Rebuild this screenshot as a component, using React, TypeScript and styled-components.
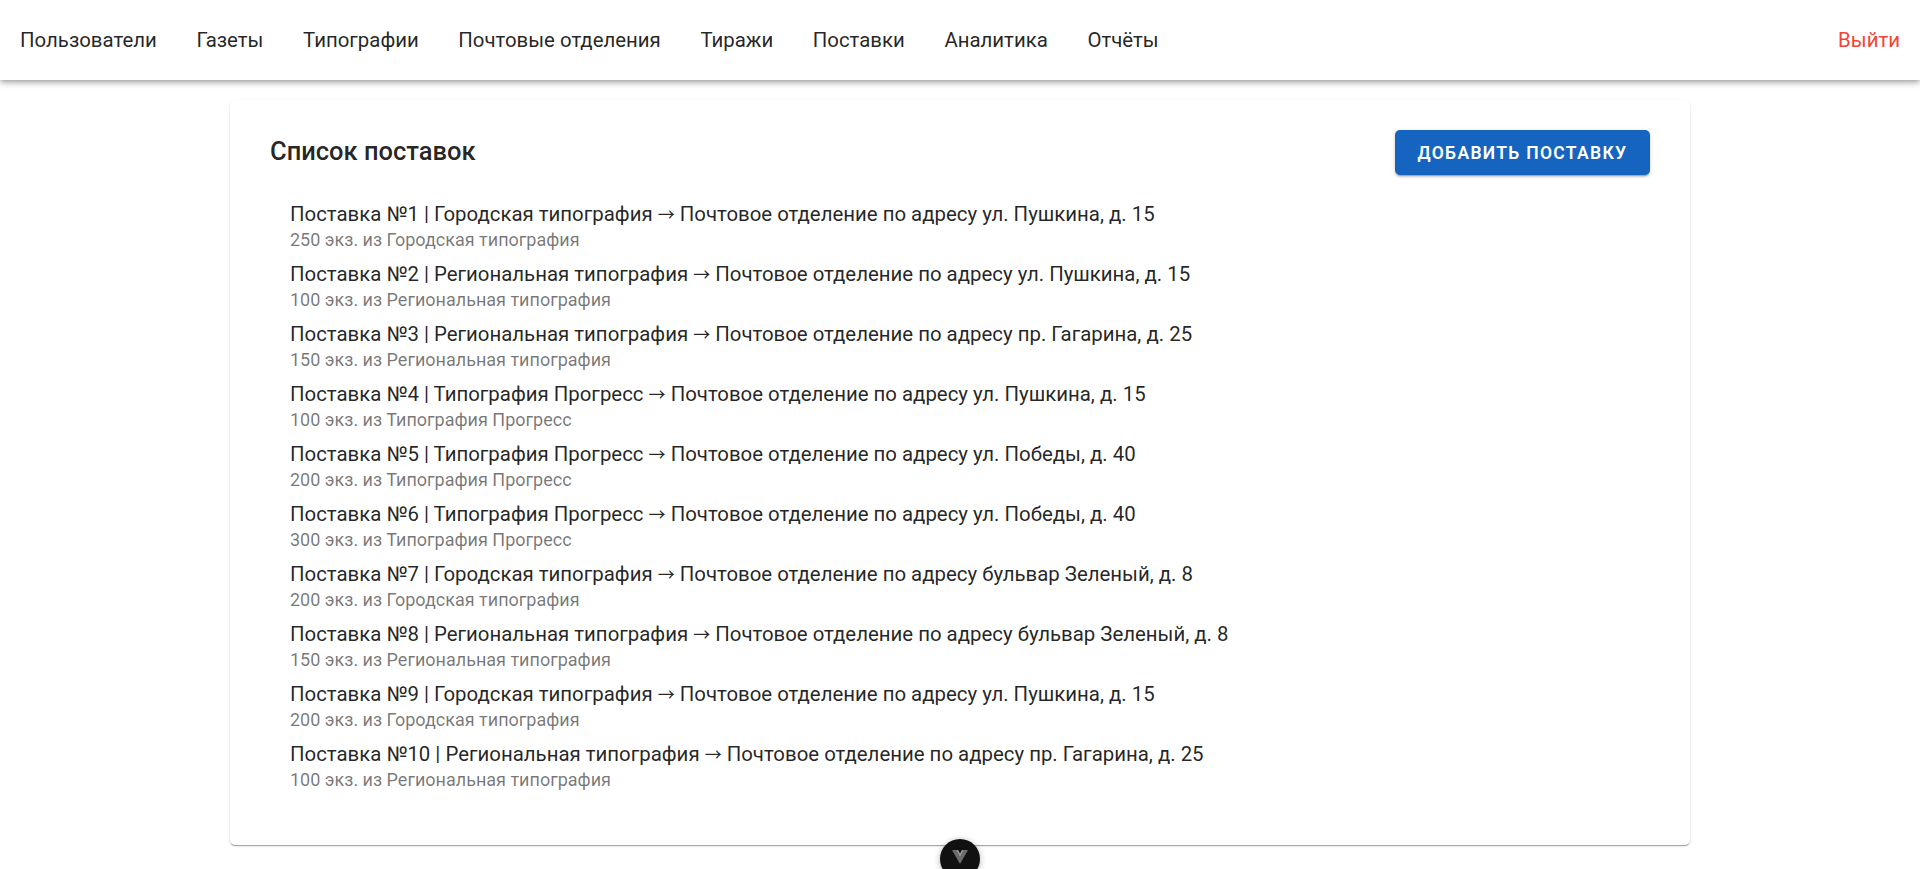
import styled, { createGlobalStyle } from "styled-components";
import { FC } from "react";

const deliveries = [
    { id: 1, from: "Городская типография", to: "ул. Пушкина, д. 15", count: 250 },
    { id: 2, from: "Региональная типография", to: "ул. Пушкина, д. 15", count: 100 },
    { id: 3, from: "Региональная типография", to: "пр. Гагарина, д. 25", count: 150 },
    { id: 4, from: "Типография Прогресс", to: "ул. Пушкина, д. 15", count: 100 },
    { id: 5, from: "Типография Прогресс", to: "ул. Победы, д. 40", count: 200 },
    { id: 6, from: "Типография Прогресс", to: "ул. Победы, д. 40", count: 300 },
    { id: 7, from: "Городская типография", to: "бульвар Зеленый, д. 8", count: 200 },
    { id: 8, from: "Региональная типография", to: "бульвар Зеленый, д. 8", count: 150 },
    { id: 9, from: "Городская типография", to: "ул. Пушкина, д. 15", count: 200 },
    { id: 10, from: "Региональная типография", to: "пр. Гагарина, д. 25", count: 100 },
];

const navItems = [
    "Пользователи",
    "Газеты",
    "Типографии",
    "Почтовые отделения",
    "Тиражи",
    "Поставки",
    "Аналитика",
    "Отчёты",
];

const App: FC = () => {
    return (
        <>
            <GlobalStyle />
            <Header>
                <NavBlock>
                    {navItems.map((item) => (
                        <NavLink key={item}>{item}</NavLink>
                    ))}
                </NavBlock>
                <LogoutLink>Выйти</LogoutLink>
            </Header>
            <Main>
                <Card>
                    <CardHeader>
                        <Title>Список поставок</Title>
                        <AddButton>Добавить поставку</AddButton>
                    </CardHeader>
                    <List>
                        {deliveries.map((d) => (
                            <Item key={d.id}>
                                <ItemTitle>
                                    Поставка №{d.id} | {d.from} <Arrow>→</Arrow> Почтовое отделение по адресу {d.to}
                                </ItemTitle>
                                <ItemSubtitle>
                                    {d.count} экз. из {d.from}
                                </ItemSubtitle>
                            </Item>
                        ))}
                    </List>
                </Card>
            </Main>
            <DevToolsButton>
                <svg width="18" height="16" viewBox="0 0 18 16">
                    <path d="M1 1 L9 15 L17 1 L13 1 L9 8 L5 1 Z" fill="#6b6b6b" />
                    <path d="M5 1 L9 8 L13 1 L11 1 L9 4.5 L7 1 Z" fill="#9a9a9a" />
                </svg>
            </DevToolsButton>
        </>
    );
};

const GlobalStyle = createGlobalStyle`
    body {
        margin: 0;
        background: #ffffff;
        font-family: Roboto, "Noto Sans", sans-serif;
        color: rgba(0, 0, 0, 0.87);
    }
`;

const Header = styled.header`
    height: 80px;
    display: flex;
    align-items: center;
    justify-content: space-between;
    padding: 0 20px;
    background: #ffffff;
    box-shadow: 0 2px 4px -1px rgba(0, 0, 0, 0.2), 0 4px 5px 0 rgba(0, 0, 0, 0.14),
        0 1px 10px 0 rgba(0, 0, 0, 0.12);
    position: relative;
    z-index: 2;
`;

const NavBlock = styled.nav`
    display: flex;
    align-items: center;
    gap: 39.6px;
`;

const NavLink = styled.a`
    font-size: 20.4px;
    color: rgba(0, 0, 0, 0.87);
    cursor: pointer;
`;

const LogoutLink = styled.a`
    font-size: 20.4px;
    color: #f44336;
    cursor: pointer;
`;

const Main = styled.main`
    display: flex;
    justify-content: center;
    padding: 20px 0 24px;
`;

const Card = styled.section`
    width: 1460px;
    box-sizing: border-box;
    padding: 30px 40px 49px;
    background: #ffffff;
    border-radius: 5px;
    box-shadow: 0 2px 1px -1px rgba(0, 0, 0, 0.2), 0 1px 1px 0 rgba(0, 0, 0, 0.14),
        0 1px 3px 0 rgba(0, 0, 0, 0.12);
`;

const CardHeader = styled.div`
    display: flex;
    align-items: center;
    justify-content: space-between;
    margin-bottom: 21px;
`;

const Title = styled.h2`
    margin: 0 0 3px;
    font-size: 25.5px;
    font-weight: 500;
    color: rgba(0, 0, 0, 0.87);
`;

const AddButton = styled.button`
    width: 255px;
    height: 45px;
    border: none;
    border-radius: 5px;
    background: #1565c0;
    color: #ffffff;
    font-family: Roboto, sans-serif;
    font-size: 17.5px;
    font-weight: 600;
    letter-spacing: 0.075em;
    text-transform: uppercase;
    box-shadow: 0 3px 1px -2px rgba(0, 0, 0, 0.2), 0 2px 2px 0 rgba(0, 0, 0, 0.14),
        0 1px 5px 0 rgba(0, 0, 0, 0.12);
    cursor: pointer;
`;

const List = styled.ul`
    list-style: none;
    margin: 0;
    padding: 0 20px;
`;

const Item = styled.li`
    height: 60px;
    display: flex;
    flex-direction: column;
    justify-content: center;
`;

const ItemTitle = styled.div`
    font-size: 20.4px;
    line-height: 28px;
    color: rgba(0, 0, 0, 0.87);
`;

const Arrow = styled.span`
    font-family: "Noto Sans CJK JP", sans-serif;
    font-size: 17px;
    line-height: 1;
`;

const ItemSubtitle = styled.div`
    font-size: 18px;
    line-height: 24px;
    color: rgba(0, 0, 0, 0.54);
`;

const DevToolsButton = styled.div`
    position: fixed;
    left: 940px;
    top: 839px;
    width: 40px;
    height: 40px;
    border-radius: 50%;
    background: #111111;
    display: flex;
    justify-content: center;
    padding-top: 10px;
    box-sizing: border-box;
    box-shadow: 0 1px 6px rgba(0, 0, 0, 0.3);
    z-index: 5;
`;

export default App;
